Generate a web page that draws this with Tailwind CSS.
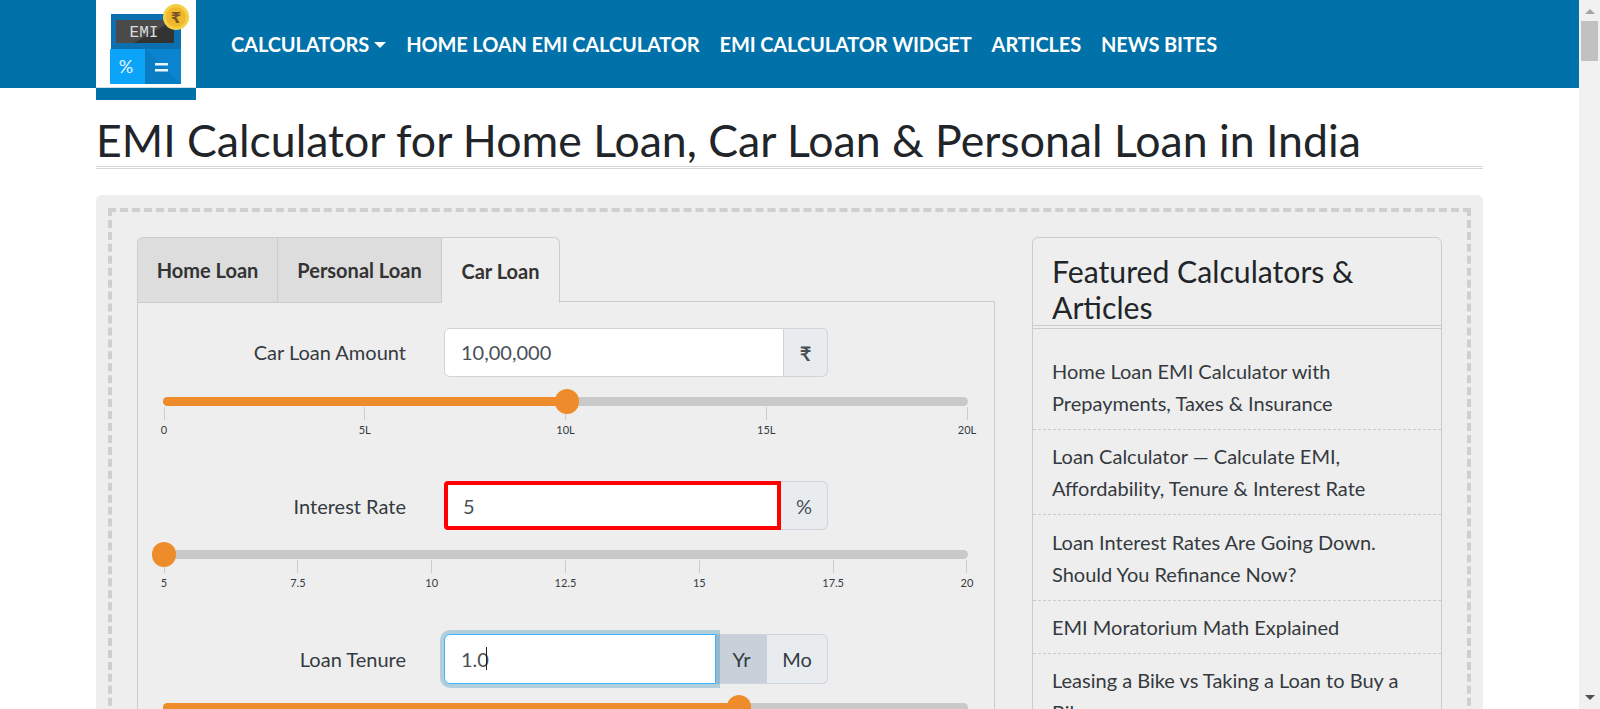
<!DOCTYPE html>
<html lang="en">
<head>
<meta charset="utf-8">
<title>EMI Calculator</title>
<script src="https://cdn.jsdelivr.net/npm/@tailwindcss/browser@4"></script>
</head>
<body class="m-0 bg-white font-['Lato',sans-serif] text-[#212529]">
<div class="flex h-[709px] w-[1600px] overflow-hidden">
  <main class="w-[1579px] shrink-0">
    <header class="flex h-[88px] bg-[#0071a9] px-[96px]">
      <div class="relative z-10 h-[100px] w-[100px] shrink-0 bg-[#0071a9]">
        <div class="h-[88px] border-b border-[#cfe0ea] bg-white">
          <svg width="100" height="88" viewBox="0 0 100 88">
            <rect x="15" y="14" width="70" height="36" fill="#0b6fb0"/>
            <rect x="20" y="20" width="58" height="23" fill="#4a4a4a"/>
            <path d="M38 43 L78 20 V43 Z" fill="#333333"/>
            <text x="48" y="37" text-anchor="middle" font-family="'Liberation Mono',monospace" font-size="16" fill="#dcdcdc">EMI</text>
            <rect x="14" y="49" width="35" height="35" fill="#0ba4f8"/>
            <rect x="49" y="49" width="36" height="35" fill="#0a84d0"/>
            <path d="M49 49 L85 84 H49 Z" fill="#0a7cc4"/>
            <text x="30" y="73" text-anchor="middle" font-family="'Lato',sans-serif" font-size="18" fill="#e8f6ff">%</text>
            <rect x="59" y="63" width="13" height="2.5" fill="#e8f6ff"/>
            <rect x="59" y="69" width="13" height="2.5" fill="#e8f6ff"/>
            <circle cx="80" cy="17" r="13" fill="#f5cf45"/>
            <circle cx="80" cy="17" r="10" fill="#f0b92b"/>
            <text x="80" y="23" text-anchor="middle" font-family="'DejaVu Sans',sans-serif" font-weight="700" font-size="15" fill="#7c5426">₹</text>
          </svg>
        </div>
      </div>
      <nav class="ml-[25px] flex h-[88px] items-center text-[20px] font-bold tracking-[-0.12px] text-white">
        <a class="flex items-center px-[10px]">CALCULATORS<span class="ml-[5px] mt-[1px] h-0 w-0 border-x-[6px] border-t-[6px] border-x-transparent border-t-white"></span></a>
        <a class="px-[10px]">HOME LOAN EMI CALCULATOR</a>
        <a class="px-[10px]">EMI CALCULATOR WIDGET</a>
        <a class="px-[10px]">ARTICLES</a>
        <a class="px-[10px]">NEWS BITES</a>
      </nav>
    </header>

    <div class="px-[96px]">
      <h1 class="h-[81px] border-b-[3px] border-double border-[#d6d6d6] pt-[25px] text-[44.6px] leading-[54px] font-normal text-[#212529]">EMI Calculator for Home Loan, Car Loan &amp; Personal Loan in India</h1>

      <section class="mt-[26px] h-[900px] rounded-[6px] bg-[#eeeeee] px-[12px] pt-[13px]">
        <div class="flex h-[880px] gap-[37px] border-4 border-dashed border-[#cfcfcf] p-[25px]">
          <div class="w-[858px] shrink-0">
            <div class="relative z-10 -mb-[2px] flex h-[66px] text-[20px] font-bold text-[#333]">
              <div class="flex w-[140px] items-center justify-center rounded-tl-[6px] border border-r-0 border-[#cccccc] bg-[#dddddd]">Home Loan</div>
              <div class="flex w-[164px] items-center justify-center border border-r-0 border-[#cccccc] bg-[#dddddd]">Personal Loan</div>
              <div class="flex w-[119px] items-center justify-center rounded-tr-[6px] border border-b-0 border-[#cccccc] bg-[#eeeeee]">Car Loan</div>
            </div>
            <div class="border border-[#cccccc] pt-[26px] pr-[26px] pl-[25px]">
              <!-- Amount -->
              <div class="h-[153px]">
                <div class="flex h-[49px] items-center text-[20px]">
                  <label class="w-[243px] pb-[1px] text-right text-[#343a40]">Car Loan Amount</label>
                  <div class="ml-[38px] flex h-[49px] w-[384px]">
                    <div class="flex flex-1 items-center rounded-l-[6px] border border-[#ced4da] bg-white pb-[2px] pl-[16px] text-[#495057]">10,00,000</div>
                    <div class="flex w-[44px] items-center justify-center rounded-r-[6px] border border-l-0 border-[#ced4da] bg-[#e9ecef] font-bold text-[#495057]">₹</div>
                  </div>
                </div>
                <div class="relative mt-[20px] h-[9px] rounded-full bg-[#c9c9c9]">
                  <div class="h-[9px] w-[404px] rounded-full bg-[#ee8c2c]"></div>
                  <div class="absolute top-[-8px] left-[392px] h-[25px] w-[24px] rounded-full bg-[#ee8c2c]"></div>
                </div>
                <div class="mx-[1px] mt-[1px] flex justify-between text-[11px] leading-[14px] text-[#343a40]">
                  <div class="flex w-0 flex-col items-center"><span class="h-[13px] w-px shrink-0 bg-[#cccccc]"></span><span class="mt-[3px]">0</span></div>
                  <div class="flex w-0 flex-col items-center"><span class="h-[13px] w-px shrink-0 bg-[#cccccc]"></span><span class="mt-[3px]">5L</span></div>
                  <div class="flex w-0 flex-col items-center"><span class="h-[13px] w-px shrink-0 bg-[#cccccc]"></span><span class="mt-[3px]">10L</span></div>
                  <div class="flex w-0 flex-col items-center"><span class="h-[13px] w-px shrink-0 bg-[#cccccc]"></span><span class="mt-[3px]">15L</span></div>
                  <div class="flex w-0 flex-col items-center"><span class="h-[13px] w-px shrink-0 bg-[#cccccc]"></span><span class="mt-[3px]">20L</span></div>
                </div>
              </div>
              <!-- Interest -->
              <div class="h-[153px]">
                <div class="flex h-[49px] items-center text-[20px]">
                  <label class="w-[243px] text-right text-[#343a40]">Interest Rate</label>
                  <div class="ml-[38px] flex h-[49px] w-[384px]">
                    <div class="flex flex-1 items-center rounded-l-[4px] border-4 border-[#ff0000] bg-white pl-[15px] text-[#495057]">5</div>
                    <div class="flex w-[47px] items-center justify-center rounded-r-[6px] border border-l-0 border-[#ced4da] bg-[#e9ecef] text-[#495057]">%</div>
                  </div>
                </div>
                <div class="relative mt-[20px] h-[9px] rounded-full bg-[#c9c9c9]">
                  <div class="absolute top-[-8px] left-[-11px] h-[25px] w-[24px] rounded-full bg-[#ee8c2c]"></div>
                </div>
                <div class="mx-[1px] mt-[1px] flex justify-between text-[11px] leading-[14px] text-[#343a40]">
                  <div class="flex w-0 flex-col items-center"><span class="h-[13px] w-px shrink-0 bg-[#cccccc]"></span><span class="mt-[3px]">5</span></div>
                  <div class="flex w-0 flex-col items-center"><span class="h-[13px] w-px shrink-0 bg-[#cccccc]"></span><span class="mt-[3px]">7.5</span></div>
                  <div class="flex w-0 flex-col items-center"><span class="h-[13px] w-px shrink-0 bg-[#cccccc]"></span><span class="mt-[3px]">10</span></div>
                  <div class="flex w-0 flex-col items-center"><span class="h-[13px] w-px shrink-0 bg-[#cccccc]"></span><span class="mt-[3px]">12.5</span></div>
                  <div class="flex w-0 flex-col items-center"><span class="h-[13px] w-px shrink-0 bg-[#cccccc]"></span><span class="mt-[3px]">15</span></div>
                  <div class="flex w-0 flex-col items-center"><span class="h-[13px] w-px shrink-0 bg-[#cccccc]"></span><span class="mt-[3px]">17.5</span></div>
                  <div class="flex w-0 flex-col items-center"><span class="h-[13px] w-px shrink-0 bg-[#cccccc]"></span><span class="mt-[3px]">20</span></div>
                </div>
              </div>
              <!-- Tenure -->
              <div class="h-[153px]">
                <div class="flex h-[49px] items-center text-[20px]">
                  <label class="w-[243px] text-right text-[#343a40]">Loan Tenure</label>
                  <div class="ml-[38px] flex h-[50px] w-[384px]">
                    <div class="relative z-10 flex w-[272px] items-center rounded-l-[6px] border border-[#38b6ff] bg-white pl-[16px] text-[#495057] shadow-[0_0_0_4px_rgba(0,113,169,0.25)]">1.0<span class="ml-[-3px] h-[23px] w-px bg-[#222]"></span></div>
                    <div class="flex w-[51px] items-center justify-center border-y border-[#ced4da] bg-[#c8d1da] text-[#343a40]">Yr</div>
                    <div class="flex w-[61px] items-center justify-center rounded-r-[6px] border border-l-0 border-[#ced4da] bg-[#e9ecef] text-[#343a40]">Mo</div>
                  </div>
                </div>
                <div class="relative mt-[20px] h-[9px] rounded-full bg-[#c9c9c9]">
                  <div class="h-[9px] w-[576px] rounded-full bg-[#ee8c2c]"></div>
                  <div class="absolute top-[-8px] left-[564px] h-[25px] w-[24px] rounded-full bg-[#ee8c2c]"></div>
                </div>
              </div>
            </div>
          </div>

          <aside class="h-[700px] w-[410px] shrink-0 rounded-[6px] border border-[#cccccc]">
            <h2 class="border-b-[4px] border-double border-[#cccccc] pt-[15px] pr-[20px] pl-[19px] text-[30.2px] leading-[36px] font-normal text-[#212529]">Featured Calculators &amp; Articles</h2>
            <ul class="mt-[16px] text-[20px] leading-[32px] text-[#343a40]">
              <li class="border-b border-dashed border-[#cccccc] py-[10px] pr-[20px] pl-[19px]">Home Loan EMI Calculator with Prepayments, Taxes &amp; Insurance</li>
              <li class="border-b border-dashed border-[#cccccc] py-[10px] pr-[20px] pl-[19px]">Loan Calculator — Calculate EMI, Affordability, Tenure &amp; Interest Rate</li>
              <li class="border-b border-dashed border-[#cccccc] py-[10.5px] pr-[20px] pl-[19px]">Loan Interest Rates Are Going Down. Should You Refinance Now?</li>
              <li class="border-b border-dashed border-[#cccccc] py-[10px] pr-[20px] pl-[19px]">EMI Moratorium Math Explained</li>
              <li class="py-[10px] pr-[20px] pl-[19px]">Leasing a Bike vs Taking a Loan to Buy a Bike</li>
            </ul>
          </aside>
        </div>
      </section>
    </div>
  </main>

  <div class="flex w-[21px] shrink-0 flex-col items-center bg-[#f1f1f1]">
    <div class="mt-[9px] h-0 w-0 border-x-[5px] border-b-[5px] border-x-transparent border-b-[#a3a3a3]"></div>
    <div class="mt-[7px] h-[40px] w-[17px] bg-[#c1c1c1]"></div>
    <div class="mt-auto mb-[9px] h-0 w-0 border-x-[5px] border-t-[5px] border-x-transparent border-t-[#505050]"></div>
  </div>
</div>
</body>
</html>
